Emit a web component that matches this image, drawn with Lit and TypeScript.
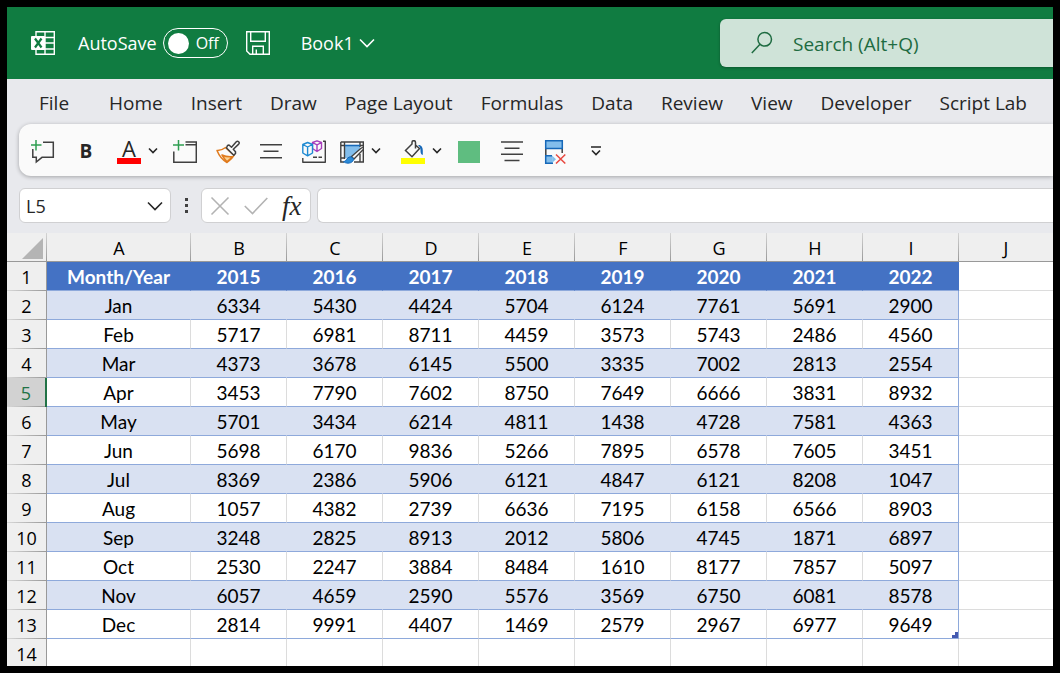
import { LitElement, html, css, nothing } from "lit";
import { customElement, property, state } from "lit/decorators.js";
import { classMap } from "lit/directives/class-map.js";

const TABS = [
  "File", "Home", "Insert", "Draw", "Page Layout", "Formulas",
  "Data", "Review", "View", "Developer", "Script Lab",
];

const COLUMNS = ["A", "B", "C", "D", "E", "F", "G", "H", "I", "J"];

const HEADINGS = ["Month/Year", "2015", "2016", "2017", "2018", "2019", "2020", "2021", "2022"];

const ROWS: (string | number)[][] = [
  ["Jan", 6334, 5430, 4424, 5704, 6124, 7761, 5691, 2900],
  ["Feb", 5717, 6981, 8711, 4459, 3573, 5743, 2486, 4560],
  ["Mar", 4373, 3678, 6145, 5500, 3335, 7002, 2813, 2554],
  ["Apr", 3453, 7790, 7602, 8750, 7649, 6666, 3831, 8932],
  ["May", 5701, 3434, 6214, 4811, 1438, 4728, 7581, 4363],
  ["Jun", 5698, 6170, 9836, 5266, 7895, 6578, 7605, 3451],
  ["Jul", 8369, 2386, 5906, 6121, 4847, 6121, 8208, 1047],
  ["Aug", 1057, 4382, 2739, 6636, 7195, 6158, 6566, 8903],
  ["Sep", 3248, 2825, 8913, 2012, 5806, 4745, 1871, 6897],
  ["Oct", 2530, 2247, 3884, 8484, 1610, 8177, 7857, 5097],
  ["Nov", 6057, 4659, 2590, 5576, 3569, 6750, 6081, 8578],
  ["Dec", 2814, 9991, 4407, 1469, 2579, 2967, 6977, 9649],
];

const icons = {
  excel: html`<svg width="24" height="24" viewBox="0 0 24 24" aria-hidden="true">
    <path d="M5 5V.7H23.3V23.3H5V19M5 6.5H23.3M14 12H23.3M5 18H23.3M14 .7V23.3" fill="none" stroke="#fff" stroke-width="1.4"/>
    <rect x="0" y="5" width="14" height="14" rx="1" fill="#fff"/>
    <path d="M4 7.5 10.5 16.5M10.5 7.5 4 16.5" stroke="#107c41" stroke-width="2.2" fill="none"/>
  </svg>`,
  save: html`<svg width="24" height="24" viewBox="0 0 24 24" fill="none" stroke="#fff" stroke-width="1.4" aria-hidden="true">
    <path d="M.7.7H23.3V23.3H4L.7 20ZM4.7.7V10.3H19.3V.7M6.7 23.3V15.3H17.3V23.3M10.3 18.5V23.3"/>
  </svg>`,
  chevron: html`<svg width="16" height="10" viewBox="0 0 16 10" fill="none" stroke="currentColor" stroke-width="1.6" aria-hidden="true"><path d="M1 1.5 8 8.5 15 1.5"/></svg>`,
  smallChevron: html`<svg width="12" height="24" viewBox="0 0 12 24" fill="none" stroke="#262626" stroke-width="1.6" aria-hidden="true"><path d="M2 8.500 6 12.500 10 8.500"/></svg>`,
  search: html`<svg width="22" height="24" viewBox="0 0 22 24" fill="none" stroke="#1e6b41" stroke-width="1.5" aria-hidden="true"><circle cx="13.7" cy="8.3" r="6.8"/><path d="M9 13.3.8 22"/></svg>`,
  comment: html`<svg width="24" height="24" viewBox="0 0 24 24" fill="none" stroke-width="1.5" aria-hidden="true">
    <path d="M12 2.3H22.3V17.3H11L5.3 22V17.3H1.8V9" stroke="#404040"/>
    <path d="M5 0V10.5M0 5H10.5" stroke="#2f9e51"/>
  </svg>`,
  window: html`<svg width="24" height="24" viewBox="0 0 24 24" fill="none" stroke-width="1.5" aria-hidden="true">
    <path d="M12.5 2H23.3V22.3H.8V11.5M12.5 4.8H23" stroke="#404040"/>
    <path d="M5.5 0V10.5M0 5H11" stroke="#2f9e51"/>
  </svg>`,
  brush: html`<svg width="24" height="24" viewBox="0 0 24 24" fill="none" stroke-width="1.5" stroke-linejoin="round" aria-hidden="true">
    <path d="M1 10.5C4 10.7 7 9.5 9.500 7.500L18 15.500C16 19 13.500 20.500 11 22.500C6.500 20 3 15.500 1 10.500Z" fill="#fafafa" stroke="#e07a1c"/>
    <path d="M6 15C9 16.500 13 17 16.500 16.700L11 21.800C9 20 7.500 17.500 6 15Z" fill="#fbd392" stroke="#e07a1c"/>
    <path d="M10.500 8 11.500 5.500 13 5 15.500 7.300 20.300 1.700A1.700 1.700 0 0 1 22.700 4.100L17.300 9.200 19.500 11.700V13.500L17.800 15.300Z" fill="#fafafa" stroke="#404040"/>
  </svg>`,
  center: html`<svg width="24" height="24" viewBox="0 0 24 24" stroke="#404040" stroke-width="1.5" aria-hidden="true"><path d="M1 4.8H23M4.5 11.2H19.5M1 17.7H23"/></svg>`,
  models: html`<svg width="24" height="24" viewBox="0 0 24 24" fill="none" stroke-width="1.4" stroke-linejoin="round" aria-hidden="true">
    <path d="M21 1.3H23.3V22.3H.8V18M11 17.300H15M16.500 17.300H20" stroke="#404040"/>
    <path d="M15 .8 19.5 2.5V8.5L15 11.5 10.5 8.5V2.5ZM10.5 2.5 15 4.8 19.5 2.5M15 4.8V11.5" fill="#fafafa" stroke="#a83fbd"/>
    <path d="M5.6 2.5 10.5 4.5V13L5.6 15.8.8 13V4.5ZM.8 4.5 5.6 7 10.5 4.5M5.6 7V15.8" fill="#fafafa" stroke="#1e8ad2"/>
  </svg>`,
  tableStyle: html`<svg width="24" height="24" viewBox="0 0 24 24" fill="none" aria-hidden="true">
    <path d="M4.5 5.5H20V9L10 18H4.5Z" fill="#83beec"/>
    <path d="M.8 2H23.3V22H14M.8 2V22H4M.8 5.5H4.5M20 5.5H23.3M4.5 2V19M20 2V7M.8 18H4.5M20 14V22" stroke="#404040" stroke-width="1.4"/>
    <path d="M5 5.5H20" stroke="#1668b8" stroke-width="1.6"/>
    <path d="M11.5 16.5 21 8.2C23 6.8 24.5 8.2 22.8 10L14 19Z" fill="#f4f4f4" stroke="#404040" stroke-width="1.3"/>
    <path d="M3.5 21.8C7 21.5 6 17.5 10 16.8C13 17 14.5 19.5 12.5 21.5C10 23.8 6 23.5 3.5 21.8Z" fill="#2b8bd8" stroke="#1668b8"/>
  </svg>`,
  fill: html`<svg width="24" height="24" viewBox="0 0 24 24" fill="none" aria-hidden="true">
    <path d="M14.500 8.500V2.500C14.500 0 11 0 11 2.500V4L4.500 10.500 11 16.700 18.500 8.500 14.500 5" stroke="#404040" stroke-width="1.5"/>
    <path d="M17 5C20 4.5 21.8 7 21.8 10.5V15C20 14.5 19.5 13 19.5 10.5C19.5 8 18.8 6.5 17 5Z" fill="#1668b8"/>
    <rect y="18" width="24" height="6" fill="#ff0"/>
  </svg>`,
  swatch: html`<svg width="24" height="24" viewBox="0 0 24 24" aria-hidden="true"><rect x="1" y="1" width="22" height="22" fill="#5fbd80"/></svg>`,
  center4: html`<svg width="24" height="24" viewBox="0 0 24 24" stroke="#404040" stroke-width="1.5" aria-hidden="true"><path d="M1 2H23M4.5 8.3H19.5M1 14.3H23M4.5 20.5H19.5"/></svg>`,
  deleteRow: html`<svg width="24" height="24" viewBox="0 0 24 24" fill="none" aria-hidden="true">
    <path d="M2.8 9V15.5M19.2 9V13" stroke="#404040" stroke-width="1.5"/>
    <path d="M2.7.8H19.3V8.5H2.7Z" fill="#83beec" stroke="#1668b8" stroke-width="1.5"/>
    <path d="M9 15.8H2.7V23.2H10" fill="#83beec" stroke="#1668b8" stroke-width="1.5"/>
    <path d="M9 15.5 13 19.3 9.5 22.5Z" fill="#83beec"/>
    <path d="M13 14.5 22.3 23.5M22.3 14.5 13 23.5" stroke="#e8483f" stroke-width="1.5"/>
  </svg>`,
  more: html`<svg width="20" height="24" viewBox="0 0 20 24" fill="none" stroke="#262626" stroke-width="1.6" aria-hidden="true"><path d="M5 7H15M6 10.5 10 14.5 14 10.5"/></svg>`,
  cancel: html`<svg width="20" height="20" viewBox="0 0 20 20" fill="none" stroke="#b3b3b3" stroke-width="1.6" aria-hidden="true"><path d="M1.5 1.5 18.5 18.5M18.5 1.5 1.5 18.5"/></svg>`,
  accept: html`<svg width="24" height="20" viewBox="0 0 24 20" fill="none" stroke="#b3b3b3" stroke-width="1.6" aria-hidden="true"><path d="M.8 10 8.5 17.5 23.3 2"/></svg>`,
};

const buttonReset = css`
  button {
    display: flex;
    align-items: center;
    padding: 0;
    border: 0;
    background: none;
    color: inherit;
    font: inherit;
  }
  svg {
    display: block;
    flex: none;
  }
`;

@customElement("title-bar")
export class TitleBar extends LitElement {
  @state() private autoSave = false;

  static styles = [
    buttonReset,
    css`
      :host {
        display: flex;
        align-items: center;
        height: 72px;
        padding-left: 24px;
        background: #107c41;
        color: #fff;
        font-size: 18px;
      }
      .auto {
        display: flex;
        align-items: center;
        gap: 6px;
        margin: 0 18px 0 23px;
      }
      .switch {
        display: flex;
        align-items: center;
        gap: 7px;
        box-sizing: border-box;
        width: 65px;
        height: 30px;
        padding-left: 4px;
        border: 1px solid #fff;
        border-radius: 15px;
        font-size: 16px;
      }
      .knob {
        appearance: none;
        width: 21px;
        height: 21px;
        margin: 0;
        border-radius: 50%;
        background: #fff;
      }
      .book {
        gap: 5px;
        margin-left: 31px;
      }
      .search {
        display: flex;
        align-items: center;
        gap: 20px;
        box-sizing: border-box;
        width: 333px;
        height: 48px;
        margin-left: auto;
        padding-left: 31px;
        border-radius: 6px 0 0 6px;
        background: #cfe3d8;
        box-shadow: 0 1px 3px rgba(0, 0, 0, 0.3);
      }
      .query {
        flex: 1;
        min-width: 0;
        padding: 2px 0 0;
        border: 0;
        outline: 0;
        background: none;
        color: #1e6b41;
        font: inherit;
        font-size: 19px;
      }
      .query::placeholder {
        color: #1e6b41;
        opacity: 1;
      }
    `,
  ];

  render() {
    return html`
      ${icons.excel}
      <label class="auto">
        AutoSave
        <span class="switch">
          <input class="knob" type="checkbox" aria-label="AutoSave" .checked=${this.autoSave}
            @change=${() => (this.autoSave = !this.autoSave)} />
          ${this.autoSave ? "On" : "Off"}
        </span>
      </label>
      <button aria-label="Save">${icons.save}</button>
      <button class="book">Book1 ${icons.chevron}</button>
      <label class="search">
        ${icons.search}
        <input class="query" type="text" aria-label="Search" placeholder="Search (Alt+Q)" />
      </label>
    `;
  }
}

@customElement("ribbon-bar")
export class RibbonBar extends LitElement {
  static styles = [
    buttonReset,
    css`
      :host {
        display: block;
        color: #262626;
      }
      .tabs {
        display: flex;
        align-items: center;
        gap: 28px;
        height: 45px;
        padding: 3px 0 0 32px;
        box-sizing: border-box;
        font-size: 19px;
        white-space: nowrap;
      }
      .tab {
        color: inherit;
        text-decoration: none;
      }
      .tab:first-child {
        margin-right: 12px;
      }
      .tools {
        display: flex;
        gap: 14px;
        margin-left: 12px;
        padding: 16px 12px 12px;
        border-radius: 12px 0 0 12px;
        background: #fafafa;
        box-shadow: 0 1px 4px rgba(0, 0, 0, 0.3);
      }
      .group {
        display: flex;
        gap: 19px;
      }
      .split {
        gap: 6px;
      }
      .bold {
        justify-content: center;
        width: 24px;
        height: 22px;
        font-size: 19px;
        font-weight: 700;
      }
      .colour {
        display: grid;
        grid-template-rows: 18px 6px;
        width: 24px;
        justify-items: center;
        font-size: 22px;
        line-height: 16px;
      }
      .bar {
        width: 24px;
        background: #f00;
      }
    `,
  ];

  render() {
    return html`
      <nav class="tabs">
        ${TABS.map((name) => html`<a class="tab" href="#">${name}</a>`)}
      </nav>
      <div class="tools" role="toolbar" aria-label="Quick access">
        <div class="group">
          <button aria-label="New comment">${icons.comment}</button>
          <button class="bold" aria-label="Bold">B</button>
          <button class="split" aria-label="Font colour">
            <span class="colour">A<span class="bar"></span></span>${icons.smallChevron}
          </button>
        </div>
        <div class="group">
          <button aria-label="New window">${icons.window}</button>
          <button aria-label="Format painter">${icons.brush}</button>
          <button aria-label="Centre">${icons.center}</button>
          <button aria-label="3D models">${icons.models}</button>
        </div>
        <div class="group">
          <button class="split" aria-label="Format as table">${icons.tableStyle}${icons.smallChevron}</button>
          <button class="split" aria-label="Fill colour">${icons.fill}${icons.smallChevron}</button>
        </div>
        <div class="group">
          <button aria-label="Colour swatch">${icons.swatch}</button>
          <button aria-label="Centre text">${icons.center4}</button>
          <button aria-label="Delete rows">${icons.deleteRow}</button>
          <button aria-label="More commands">${icons.more}</button>
        </div>
      </div>
    `;
  }
}

@customElement("formula-bar")
export class FormulaBar extends LitElement {
  @property() cell = "";

  static styles = [
    buttonReset,
    css`
      :host {
        display: flex;
        align-items: stretch;
        height: 35px;
        padding: 12px 0 10px 12px;
        color: #262626;
        font-size: 18px;
      }
      .box {
        display: flex;
        align-items: center;
        box-sizing: border-box;
        border: 1px solid #d0d0d2;
        border-radius: 6px;
        background: #fff;
      }
      .name {
        width: 152px;
        padding: 0 7px 0 6px;
      }
      .field {
        flex: 1;
        min-width: 0;
        padding: 0;
        border: 0;
        outline: 0;
        background: none;
        color: inherit;
        font: inherit;
      }
      .dots {
        display: grid;
        align-content: center;
        justify-content: center;
        gap: 3px;
        width: 30px;
      }
      .dot {
        width: 3px;
        height: 3px;
        background: #404040;
      }
      .actions {
        width: 110px;
        gap: 14px;
        padding-left: 8px;
      }
      .fx {
        font: italic 27px "Liberation Serif", serif;
        line-height: 28px;
      }
      .formula {
        flex: 1;
        min-width: 0;
        margin-left: 6px;
        padding: 0 8px;
        border-right: 0;
        border-radius: 6px 0 0 6px;
      }
    `,
  ];

  render() {
    return html`
      <div class="box name">
        <input class="field" type="text" aria-label="Name box" .value=${this.cell} />
        <button aria-label="Show names">${icons.chevron}</button>
      </div>
      <div class="dots"><i class="dot"></i><i class="dot"></i><i class="dot"></i></div>
      <div class="box actions">
        <button aria-label="Cancel">${icons.cancel}</button>
        <button aria-label="Enter">${icons.accept}</button>
        <button class="fx" aria-label="Insert function">fx</button>
      </div>
      <div class="box formula">
        <input class="field" type="text" aria-label="Formula" />
      </div>
    `;
  }
}

@customElement("sheet-grid")
export class SheetGrid extends LitElement {
  @property({ type: Number }) activeRow = 0;

  static styles = css`
    :host {
      display: block;
      background: #fff;
    }
    .grid {
      width: 100%;
      border-spacing: 0;
      table-layout: fixed;
      color: #000;
      font-size: 19px;
      text-align: center;
    }
    .w-head { width: 40px; }
    .w-first { width: 144px; }
    .w-data { width: 96px; }
    th,
    td {
      box-sizing: border-box;
      height: 29px;
      padding: 2px 0 0;
      border-right: 1px solid #dcdcdc;
      border-bottom: 1px solid #dcdcdc;
      font-weight: 400;
      line-height: 26px;
    }
    td,
    .heading {
      font-family: Lato, Carlito, sans-serif;
    }
    .letter,
    .number,
    .corner {
      background-color: #efefef;
      font-size: 18px;
    }
    .letter,
    .corner {
      border-right: 0;
      border-bottom-color: #999;
      background-image: linear-gradient(#d4d4d4, #999);
      background-position: 100% 0;
      background-size: 1px 100%;
      background-repeat: no-repeat;
    }
    .letter:last-child {
      background-image: none;
    }
    .blank:last-child {
      border-right: 0;
    }
    .corner svg {
      display: block;
      margin: 0 4px 0 auto;
    }
    .number {
      padding: 1px 0;
      border-right-color: #999;
      border-bottom: 0;
      background-image: linear-gradient(to right, #d8d8d8, #999);
      background-position: 0 100%;
      background-size: 100% 1px;
      background-repeat: no-repeat;
    }
    .active {
      border-right: 2px solid #217346;
      background-color: #d2d2d2;
      color: #217346;
    }
    .heading {
      border-color: #4472c4;
      border-bottom-color: #8ea9db;
      background: #4472c4;
      color: #fff;
      font-weight: 700;
    }
    .cell {
      border-bottom-color: #8ea9db;
    }
    .band {
      border-right-color: #d9e1f2;
      background: #d9e1f2;
    }
    .edge {
      border-right-color: #8ea9db;
    }
    .last {
      background: conic-gradient(#4459b0 0 0) 100% 100% / 6px 3px no-repeat,
        conic-gradient(#4459b0 0 0) 100% 100% / 3px 6px no-repeat;
    }
  `;

  private rowNumber(n: number) {
    return html`<th scope="row" class=${classMap({ number: true, active: n === this.activeRow })}>${n}</th>`;
  }

  render() {
    const lastRow = ROWS.length - 1;
    return html`
      <table class="grid">
        <colgroup>
          <col class="w-head" />
          <col class="w-first" />
          ${HEADINGS.slice(1).map(() => html`<col class="w-data" />`)}
          <col />
        </colgroup>
        <thead>
          <tr>
            <td class="corner">
              <svg width="21" height="21" viewBox="0 0 21 21" aria-hidden="true"><path d="M21 0V21H0Z" fill="#b4b4b4" /></svg>
            </td>
            ${COLUMNS.map((c) => html`<th scope="col" class="letter">${c}</th>`)}
          </tr>
        </thead>
        <tbody>
          <tr>
            ${this.rowNumber(1)}
            ${HEADINGS.map((h) => html`<th scope="col" class="heading">${h}</th>`)}
            <td class="blank"></td>
          </tr>
          ${ROWS.map((row, r) => html`
            <tr>
              ${this.rowNumber(r + 2)}
              ${row.map((value, c) => html`<td class=${classMap({
                cell: true,
                band: r % 2 === 0,
                edge: c === row.length - 1,
                last: r === lastRow && c === row.length - 1,
              })}>${value}</td>`)}
              <td class="blank"></td>
            </tr>`)}
          <tr>
            ${this.rowNumber(ROWS.length + 2)}
            ${COLUMNS.map(() => html`<td class="blank">${nothing}</td>`)}
          </tr>
        </tbody>
      </table>
    `;
  }
}

@customElement("app-root")
export class AppRoot extends LitElement {
  static styles = css`
    :host {
      display: flex;
      flex-direction: column;
      box-sizing: border-box;
      height: 100vh;
      border: 7px solid #000;
      overflow: hidden;
      background: #e8e9ed;
      font-family: "Open Sans", "Noto Sans", sans-serif;
    }
    .sheet {
      flex: 1;
      min-height: 0;
      overflow: hidden;
    }
  `;

  render() {
    return html`
      <title-bar></title-bar>
      <ribbon-bar></ribbon-bar>
      <formula-bar cell="L5"></formula-bar>
      <sheet-grid class="sheet" .activeRow=${5}></sheet-grid>
    `;
  }
}
